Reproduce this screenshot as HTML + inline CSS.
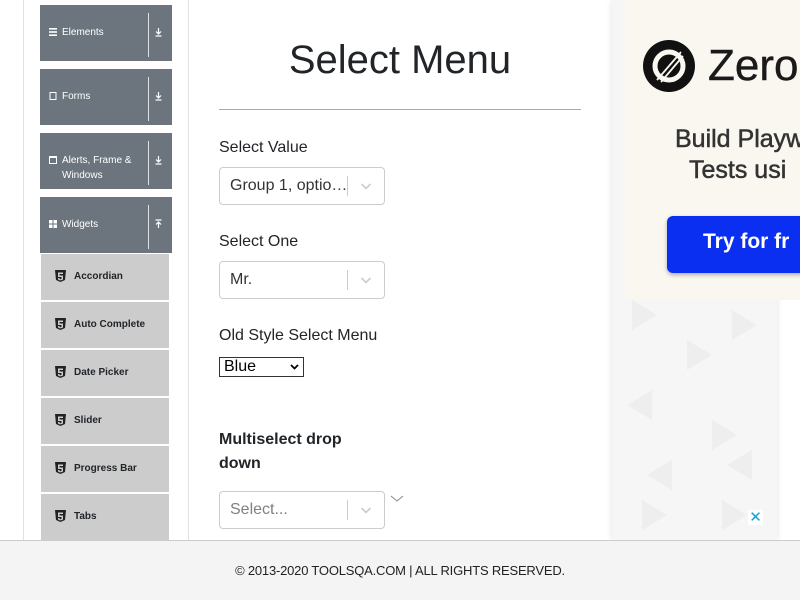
<!DOCTYPE html>
<html><head><meta charset="utf-8"><style>
*{box-sizing:border-box;margin:0;padding:0}
body{width:800px;height:600px;overflow:hidden;background:#fff;font-family:"Liberation Sans",Arial,sans-serif;color:#212529;position:relative}
.abs{position:absolute}
.vline{position:absolute;top:0;height:540px;width:1px;background:#dee2e6}
.grp{position:absolute;left:40px;width:132px;height:56px;background:#6c757d;color:#fff;font-size:10px}
.grp .sep{position:absolute;left:108px;top:8px;width:1px;height:44px;background:#e0e0e0}
.grp .lbl{position:absolute;left:22px;top:20px;line-height:15px}
.grp .ic{position:absolute;left:9px;top:23px;width:8px;height:8px}
.grp .arr{position:absolute;left:114px;top:22px;width:9px;height:10px}
.sub{position:absolute;left:41px;width:128px;height:46px;background:#ccc;font-size:10px;font-weight:bold;color:#212529}
.sub span{position:absolute;left:33px;top:17px}
.sub svg{position:absolute;left:14px;top:16px}
.lab{position:absolute;left:219px;font-size:16px;color:#212529}
.sel{position:absolute;left:219px;width:166px;height:38px;border:1px solid #ccc;border-radius:4px;background:#fff;font-size:16px}
.sel .t{position:absolute;left:10px;top:9px;color:#333}
.sel .d{position:absolute;left:127px;top:8px;width:1px;height:20px;background:#ccc}
.sel svg{position:absolute;left:140px;top:12px}
</style></head><body>
<div class="vline" style="left:23px"></div>
<div class="vline" style="left:188px"></div>

<div class="grp" style="top:5px"><svg class="ic" viewBox="0 0 8 8"><rect y="0" width="8" height="1.6" fill="#fff"/><rect y="3.2" width="8" height="1.6" fill="#fff"/><rect y="6.4" width="8" height="1.6" fill="#fff"/></svg><div class="lbl">Elements</div><div class="sep"></div><svg class="arr" viewBox="0 0 9 10"><path d="M4.5 1v6M2 4.5l2.5 2.5 2.5-2.5M1.5 9h6" stroke="#fff" fill="none" stroke-width="1.2"/></svg></div>
<div class="grp" style="top:69px"><svg class="ic" viewBox="0 0 8 8"><rect x="1" y="0.5" width="6" height="7" fill="none" stroke="#fff"/></svg><div class="lbl">Forms</div><div class="sep"></div><svg class="arr" viewBox="0 0 9 10"><path d="M4.5 1v6M2 4.5l2.5 2.5 2.5-2.5M1.5 9h6" stroke="#fff" fill="none" stroke-width="1.2"/></svg></div>
<div class="grp" style="top:133px"><svg class="ic" viewBox="0 0 8 8"><rect x="0.5" y="0.5" width="7" height="7" fill="none" stroke="#fff"/><rect x="0.5" y="0.5" width="7" height="1.5" fill="#fff"/></svg><div class="lbl">Alerts, Frame &amp;<br>Windows</div><div class="sep"></div><svg class="arr" viewBox="0 0 9 10"><path d="M4.5 1v6M2 4.5l2.5 2.5 2.5-2.5M1.5 9h6" stroke="#fff" fill="none" stroke-width="1.2"/></svg></div>
<div class="grp" style="top:197px"><svg class="ic" viewBox="0 0 8 8"><rect x="0" y="0" width="3.5" height="3.5" fill="#fff"/><rect x="4.5" y="0" width="3.5" height="3.5" fill="#fff"/><rect x="0" y="4.5" width="3.5" height="3.5" fill="#fff"/><rect x="4.5" y="4.5" width="3.5" height="3.5" fill="#fff"/></svg><div class="lbl">Widgets</div><div class="sep"></div><svg class="arr" viewBox="0 0 9 10"><path d="M4.5 9V3M2 5.5l2.5-2.5 2.5 2.5M1.5 1h6" stroke="#fff" fill="none" stroke-width="1.2"/></svg></div>

<div class="sub" style="top:254px"><svg width="11" height="12" viewBox="0 0 11 12"><path d="M0 0h11l-1 10-4.5 2L1 10z" fill="#222"/><path d="M3 2.5h5v1.5H4.5v1.5H8v4l-2.5 1-2.5-1V8h1.5v.8l1 .4 1-.4V7H3z" fill="#ccc"/></svg><span>Accordian</span></div>
<div class="sub" style="top:302px"><svg width="11" height="12" viewBox="0 0 11 12"><path d="M0 0h11l-1 10-4.5 2L1 10z" fill="#222"/><path d="M3 2.5h5v1.5H4.5v1.5H8v4l-2.5 1-2.5-1V8h1.5v.8l1 .4 1-.4V7H3z" fill="#ccc"/></svg><span>Auto Complete</span></div>
<div class="sub" style="top:350px"><svg width="11" height="12" viewBox="0 0 11 12"><path d="M0 0h11l-1 10-4.5 2L1 10z" fill="#222"/><path d="M3 2.5h5v1.5H4.5v1.5H8v4l-2.5 1-2.5-1V8h1.5v.8l1 .4 1-.4V7H3z" fill="#ccc"/></svg><span>Date Picker</span></div>
<div class="sub" style="top:398px"><svg width="11" height="12" viewBox="0 0 11 12"><path d="M0 0h11l-1 10-4.5 2L1 10z" fill="#222"/><path d="M3 2.5h5v1.5H4.5v1.5H8v4l-2.5 1-2.5-1V8h1.5v.8l1 .4 1-.4V7H3z" fill="#ccc"/></svg><span>Slider</span></div>
<div class="sub" style="top:446px"><svg width="11" height="12" viewBox="0 0 11 12"><path d="M0 0h11l-1 10-4.5 2L1 10z" fill="#222"/><path d="M3 2.5h5v1.5H4.5v1.5H8v4l-2.5 1-2.5-1V8h1.5v.8l1 .4 1-.4V7H3z" fill="#ccc"/></svg><span>Progress Bar</span></div>
<div class="sub" style="top:494px"><svg width="11" height="12" viewBox="0 0 11 12"><path d="M0 0h11l-1 10-4.5 2L1 10z" fill="#222"/><path d="M3 2.5h5v1.5H4.5v1.5H8v4l-2.5 1-2.5-1V8h1.5v.8l1 .4 1-.4V7H3z" fill="#ccc"/></svg><span>Tabs</span></div>

<div class="abs" style="left:219px;width:362px;top:36px;text-align:center;font-size:40px;line-height:48px">Select Menu</div>
<div class="abs" style="left:219px;width:362px;top:109px;height:1px;background:#aaa"></div>

<div class="lab" style="top:139px">Select Value</div>
<div class="sel" style="top:167px"><span class="t">Group 1, optio…</span><div class="d"></div><svg width="12" height="12" viewBox="0 0 12 12"><path d="M1.5 4l4.5 4.5L10.5 4" stroke="#ccc" stroke-width="1.6" fill="none"/></svg></div>
<div class="lab" style="top:233px">Select One</div>
<div class="sel" style="top:261px"><span class="t">Mr.</span><div class="d"></div><svg width="12" height="12" viewBox="0 0 12 12"><path d="M1.5 4l4.5 4.5L10.5 4" stroke="#ccc" stroke-width="1.6" fill="none"/></svg></div>
<div class="lab" style="top:327px">Old Style Select Menu</div>
<div class="abs" style="left:219px;top:357px;width:85px;height:20px;border:1px solid #333;font-size:16px;line-height:18px;padding-left:4px;color:#000">Blue<svg style="position:absolute;left:70px;top:5px" width="9" height="8" viewBox="0 0 9 8"><path d="M1 2l3.5 3.5L8 2" stroke="#000" stroke-width="1.8" fill="none"/></svg></div>
<div class="lab" style="top:428px;font-weight:bold;line-height:24px">Multiselect drop<br>down</div>
<div class="sel" style="top:491px"><span class="t" style="color:#808080">Select...</span><div class="d"></div><svg width="12" height="12" viewBox="0 0 12 12"><path d="M1.5 4l4.5 4.5L10.5 4" stroke="#ccc" stroke-width="1.6" fill="none"/></svg></div>
<svg class="abs" style="left:390px;top:494px" width="14" height="10" viewBox="0 0 14 10"><path d="M1 2l6 5 6-5" stroke="#888" stroke-width="1" fill="none"/></svg>

<div class="abs" style="left:612px;top:0;width:165px;height:540px;background:#f6f6f6;box-shadow:0 0 6px rgba(0,0,0,.12)"></div>
<svg class="abs" style="left:612px;top:300px" width="165" height="240" viewBox="0 0 165 240"><g fill="#eeeeee"><path d="M20 0l25 15-25 15z"/><path d="M75 40l25 15-25 15z"/><path d="M120 10l25 15-25 15z"/><path d="M40 90l-25 15 25 15z"/><path d="M100 120l25 15-25 15z"/><path d="M60 160l-25 15 25 15z"/><path d="M140 150l-25 15 25 15z"/><path d="M30 200l25 15-25 15z"/><path d="M110 200l25 15-25 15z"/></g></svg>
<div class="abs" style="left:625px;top:0;width:175px;height:300px;background:#faf6f0"></div>
<svg class="abs" style="left:642px;top:39px" width="54" height="54" viewBox="0 0 54 54"><circle cx="27" cy="27" r="26" fill="#111"/><circle cx="27" cy="27" r="14" fill="none" stroke="#faf6f0" stroke-width="5"/><circle cx="27" cy="27" r="8" fill="#111"/><path d="M15 41L39 13M19 43L41 17" stroke="#faf6f0" stroke-width="1.8"/></svg>
<div class="abs" style="left:708px;top:39px;font-size:44px;color:#1a1a1a;white-space:nowrap;line-height:54px;font-weight:500;-webkit-text-stroke:0.4px #1a1a1a">Zero</div>
<div class="abs" style="left:675px;top:124px;font-size:25px;color:#333;white-space:nowrap;line-height:31px;-webkit-text-stroke:0.5px #333">Build Playw</div>
<div class="abs" style="left:689px;top:155px;font-size:25px;color:#333;white-space:nowrap;line-height:31px;-webkit-text-stroke:0.5px #333">Tests usi</div>
<div class="abs" style="left:667px;top:216px;width:140px;height:57px;background:#0a2ff0;border-radius:6px;box-shadow:0 2px 4px rgba(0,0,0,.3)"></div>
<div class="abs" style="left:703px;top:230px;font-size:21px;font-weight:bold;color:#fff;white-space:nowrap">Try for fr</div>
<div class="abs" style="left:748px;top:510px;width:15px;height:15px;background:#fff;color:#1aa0d0;font-size:15px;line-height:15px;text-align:center">✕</div>

<div class="abs" style="left:0;top:540px;width:800px;height:60px;background:#f4f4f4;border-top:1px solid #ccc;text-align:center;font-size:13px;line-height:60px;color:#222;letter-spacing:-0.2px">© 2013-2020 TOOLSQA.COM | ALL RIGHTS RESERVED.</div>
</body></html>
